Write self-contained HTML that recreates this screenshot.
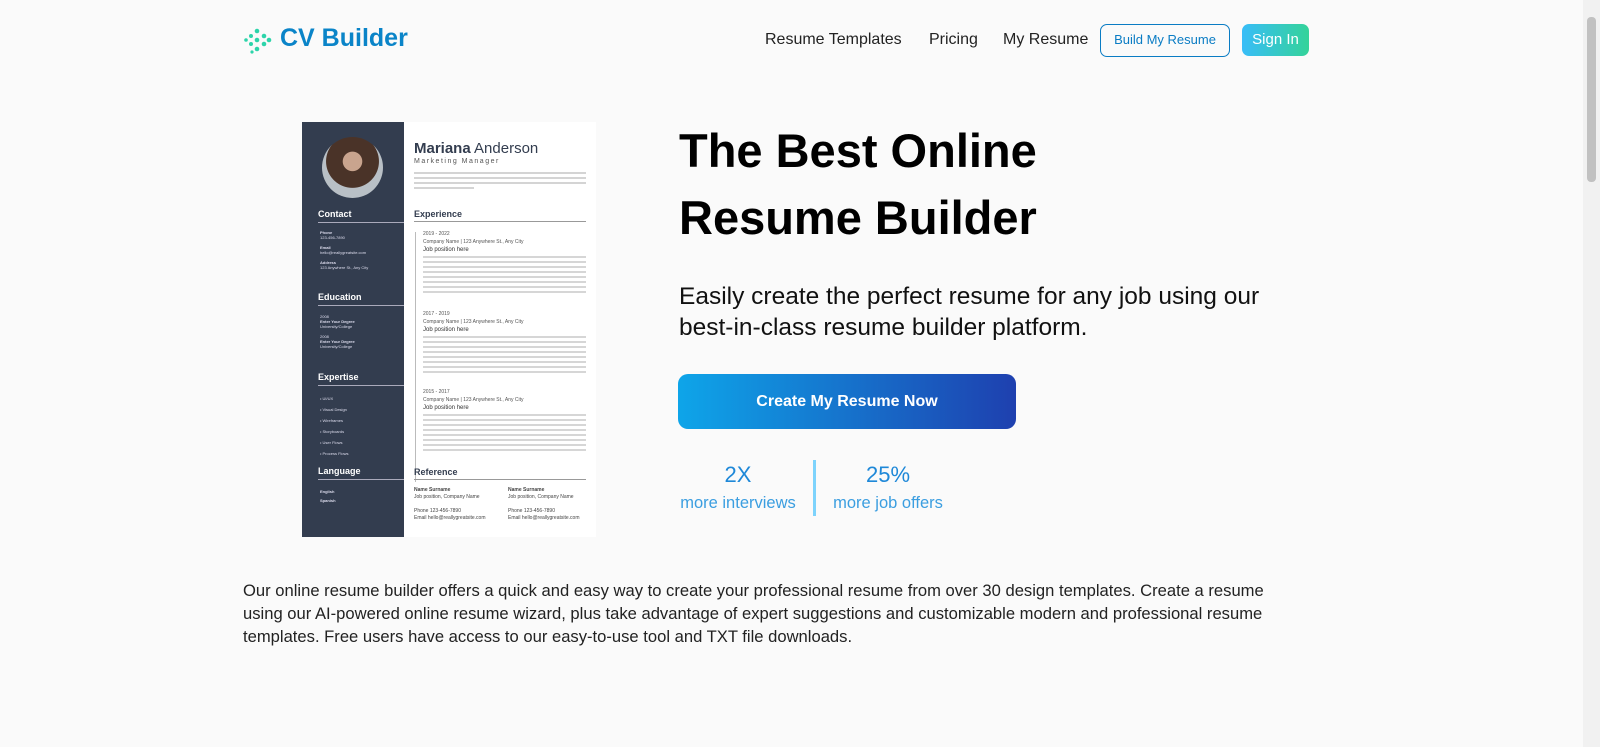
<!DOCTYPE html>
<html><head><style>
*{margin:0;padding:0;box-sizing:border-box}
body{width:1600px;height:747px;background:#fafafa;font-family:"Liberation Sans",sans-serif;position:relative;overflow:hidden;color:#111}
.a{position:absolute}
.nav{font-size:16px;color:#222;top:31px}
.sb{position:absolute;right:0;top:0;width:17px;height:747px;background:#f1f1f1}
.sb div{position:absolute;left:4px;top:17px;width:9px;height:165px;background:#c1c1c1;border-radius:4px}
.side{left:302px;top:122px;width:102px;height:415px;background:#333d4f}
.sh{color:#fff;font-size:9px;font-weight:bold;left:318px}
.sl{left:318px;width:86px;height:1px;background:#aab}
.st{color:#dde;font-size:4px;left:320px;line-height:5px}
.gl{background:#d4d4d4;height:2px;position:absolute}
</style></head><body>
<svg class="a" style="left:243px;top:27px" width="30" height="28" viewBox="0 0 30 28" fill="#2dd4aa">
<circle cx="3" cy="13" r="1.8"/><circle cx="8" cy="9" r="2"/><circle cx="8" cy="17" r="2"/><circle cx="14" cy="4" r="2.3"/><circle cx="14" cy="13" r="2.3"/><circle cx="14" cy="22" r="2.3"/><circle cx="21" cy="9" r="2.3"/><circle cx="21" cy="17" r="2.3"/><circle cx="26" cy="13" r="2.3"/><circle cx="9" cy="25" r="1.6"/>
</svg>
<div class="a" style="left:280px;top:24px;font-size:25px;font-weight:bold;color:#0a84c8">CV Builder</div>
<div class="a nav" style="left:765px">Resume Templates</div>
<div class="a nav" style="left:929px">Pricing</div>
<div class="a nav" style="left:1003px">My Resume</div>
<div class="a" style="left:1100px;top:24px;width:130px;height:33px;border:1.5px solid #0a7cc4;border-radius:7px;color:#0a7cc4;font-size:13px;text-align:center;line-height:30px">Build My Resume</div>
<div class="a" style="left:1242px;top:24px;width:67px;height:32px;border-radius:7px;background:linear-gradient(90deg,#38bdf8,#34d399);color:#fff;font-size:15px;text-align:center;line-height:32px">Sign In</div>

<div class="a" style="left:302px;top:122px;width:294px;height:415px;background:#fff"></div>
<div class="a side"></div>
<div class="a" style="left:322px;top:137px;width:61px;height:61px;border-radius:50%;background:radial-gradient(circle at 50% 40%,#c9a48e 0 20%,#4a3328 21% 55%,#b9c0c6 56%)"></div>
<div class="a sh" style="top:209px">Contact</div><div class="a sl" style="top:222px"></div>
<div class="a st" style="top:230px"><b>Phone</b><br>123-456-7890<br><br><b>Email</b><br>hello@reallygreatsite.com<br><br><b>Address</b><br>123 Anywhere St., Any City</div>
<div class="a sh" style="top:292px">Education</div><div class="a sl" style="top:305px"></div>
<div class="a st" style="top:314px">2008<br><b>Enter Your Degree</b><br>University/College<br><br>2008<br><b>Enter Your Degree</b><br>University/College</div>
<div class="a sh" style="top:372px">Expertise</div><div class="a sl" style="top:385px"></div>
<div class="a st" style="top:393px;line-height:11px">• UI/UX<br>• Visual Design<br>• Wireframes<br>• Storyboards<br>• User Flows<br>• Process Flows</div>
<div class="a sh" style="top:466px">Language</div><div class="a sl" style="top:479px"></div>
<div class="a st" style="top:487px;line-height:9px"><b>English<br>Spanish</b></div>
<div class="a" style="left:414px;top:140px;font-size:15px;color:#333d4f"><b>Mariana</b> Anderson</div>
<div class="a" style="left:414px;top:158px;font-size:7px;color:#555;letter-spacing:1.5px">Marketing Manager</div>
<div class="gl" style="left:414px;top:172px;width:172px"></div><div class="gl" style="left:414px;top:177px;width:172px"></div><div class="gl" style="left:414px;top:182px;width:172px"></div><div class="gl" style="left:414px;top:187px;width:60px"></div>
<div class="a" style="left:414px;top:209px;font-size:9px;font-weight:bold;color:#333d4f">Experience</div>
<div class="a" style="left:414px;top:221px;width:172px;height:1px;background:#999"></div>
<div class="a" style="left:415px;top:232px;width:1px;height:250px;background:#bbb"></div>
<div class="a" style="left:423px;top:230px;font-size:5px;color:#555;line-height:8px">2019 - 2022<br>Company Name | 123 Anywhere St., Any City<br><span style="font-size:6px;color:#333">Job position here</span></div>
<div class="gl" style="left:423px;top:256px;width:163px;height:38px;background:repeating-linear-gradient(#d6d6d6 0 2px,#fff 2px 5px)"></div>
<div class="a" style="left:423px;top:310px;font-size:5px;color:#555;line-height:8px">2017 - 2019<br>Company Name | 123 Anywhere St., Any City<br><span style="font-size:6px;color:#333">Job position here</span></div>
<div class="gl" style="left:423px;top:336px;width:163px;height:38px;background:repeating-linear-gradient(#d6d6d6 0 2px,#fff 2px 5px)"></div>
<div class="a" style="left:423px;top:388px;font-size:5px;color:#555;line-height:8px">2015 - 2017<br>Company Name | 123 Anywhere St., Any City<br><span style="font-size:6px;color:#333">Job position here</span></div>
<div class="gl" style="left:423px;top:414px;width:163px;height:38px;background:repeating-linear-gradient(#d6d6d6 0 2px,#fff 2px 5px)"></div>
<div class="a" style="left:414px;top:467px;font-size:9px;font-weight:bold;color:#333d4f">Reference</div>
<div class="a" style="left:414px;top:479px;width:172px;height:1px;background:#999"></div>
<div class="a" style="left:414px;top:487px;font-size:5px;color:#444;line-height:7px"><b>Name Surname</b><br>Job position, Company Name<br><br>Phone 123-456-7890<br>Email hello@reallygreatsite.com</div>
<div class="a" style="left:508px;top:487px;font-size:5px;color:#444;line-height:7px"><b>Name Surname</b><br>Job position, Company Name<br><br>Phone 123-456-7890<br>Email hello@reallygreatsite.com</div>

<div class="a" style="left:679px;top:117px;font-size:47px;font-weight:bold;line-height:67px;color:#000">The Best Online<br>Resume Builder</div>
<div class="a" style="left:679px;top:281px;font-size:24.5px;line-height:31px;color:#111;white-space:nowrap">Easily create the perfect resume for any job using our<br>best-in-class resume builder platform.</div>
<div class="a" style="left:678px;top:374px;width:338px;height:55px;border-radius:10px;background:linear-gradient(90deg,#0ea5e9,#1e40af);color:#fff;font-size:16px;font-weight:bold;text-align:center;line-height:55px">Create My Resume Now</div>
<div class="a" style="left:678px;top:462px;width:120px;text-align:center;color:#1e88d8;font-size:22px">2X</div>
<div class="a" style="left:673px;top:494px;width:130px;text-align:center;color:#3b9ee0;font-size:16.5px">more interviews</div>
<div class="a" style="left:813px;top:460px;width:3px;height:56px;background:#7dd3fc"></div>
<div class="a" style="left:828px;top:462px;width:120px;text-align:center;color:#1e88d8;font-size:22px">25%</div>
<div class="a" style="left:823px;top:494px;width:130px;text-align:center;color:#3b9ee0;font-size:16.5px">more job offers</div>
<div class="a" style="left:243px;top:579px;width:1070px;font-size:16.6px;line-height:23px;color:#222">Our online resume builder offers a quick and easy way to create your professional resume from over 30 design templates. Create a resume<br>using our AI-powered online resume wizard, plus take advantage of expert suggestions and customizable modern and professional resume<br>templates. Free users have access to our easy-to-use tool and TXT file downloads.</div>
<div class="sb"><div></div></div>
</body></html>
